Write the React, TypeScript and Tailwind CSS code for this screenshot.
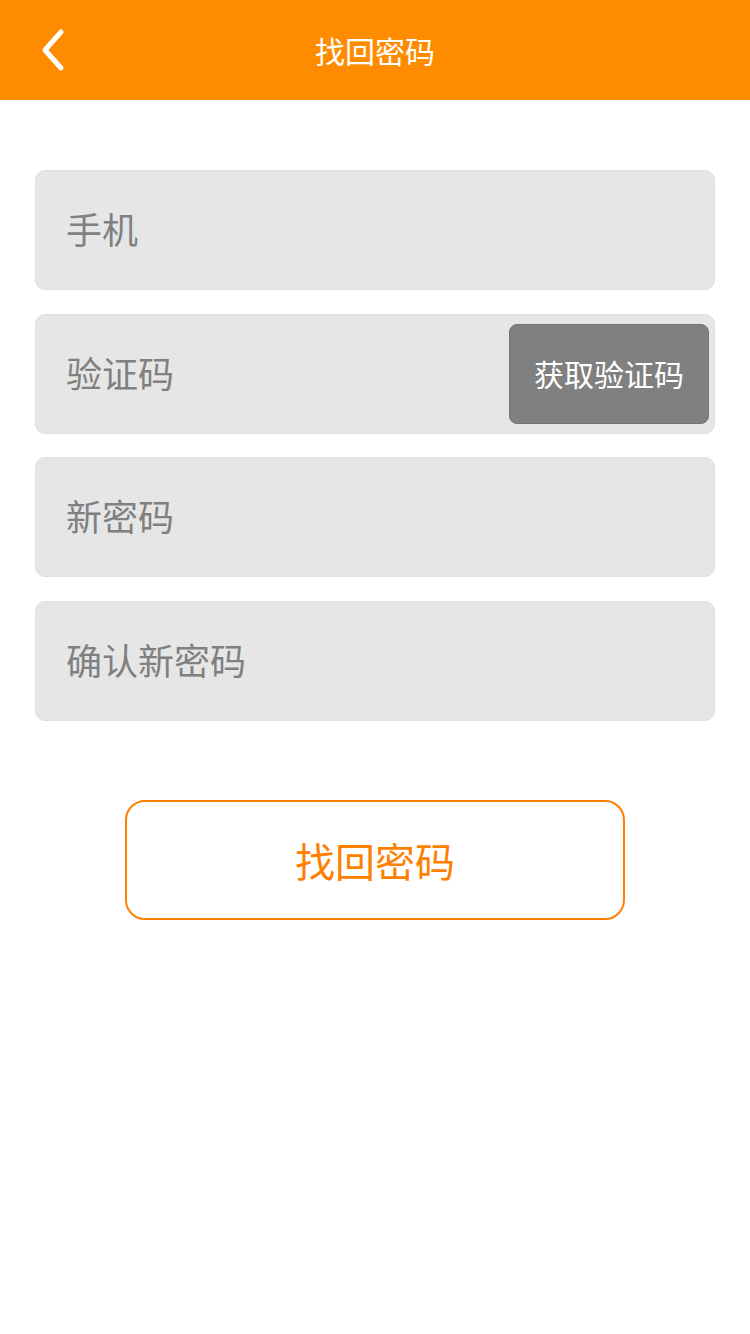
const fields = ["手机", "验证码", "新密码", "确认新密码"];

export default function App() {
  return (
    <div
      className="min-h-[1334px] w-[750px] bg-white"
      style={{ fontFamily: '"Noto Sans CJK SC", "Noto Sans", sans-serif' }}
    >
      {/* Header */}
      <header className="relative flex h-[100px] items-center justify-center bg-[#ff8c00]">
        <button className="absolute left-[34px] top-[26px] flex h-[48px] w-[36px] items-center justify-center">
          <svg width="30" height="44" viewBox="0 0 30 44" fill="none">
            <path
              d="M24 4 L8 22 L24 40"
              stroke="white"
              strokeWidth="5"
              strokeLinecap="round"
              strokeLinejoin="round"
            />
          </svg>
        </button>
        <h1 className="text-[30px] font-normal text-white">找回密码</h1>
      </header>

      {/* Form */}
      <div className="flex flex-col gap-[23.67px] px-[35px] pt-[70px]">
        {fields.map((label, i) => (
          <div
            key={label}
            className="flex h-[120px] items-center justify-between rounded-[10px] border border-[#e0e0e0] bg-[#e6e6e6] pl-[30px] pr-[5px]"
          >
            <span className="-mt-[4px] text-[36px] text-[#808080]">{label}</span>
            {i === 1 && (
              <button className="flex h-[100px] w-[200px] items-center justify-center rounded-[8px] border border-[#747474] bg-[#808080] text-[30px] text-white">
                获取验证码
              </button>
            )}
          </div>
        ))}
      </div>

      {/* Submit */}
      <div className="flex justify-center pt-[79px]">
        <button className="flex h-[120px] w-[500px] items-center justify-center rounded-[20px] border-2 border-[#ff7f00] bg-white text-[40px] text-[#ff7f00]">
          找回密码
        </button>
      </div>
    </div>
  );
}
